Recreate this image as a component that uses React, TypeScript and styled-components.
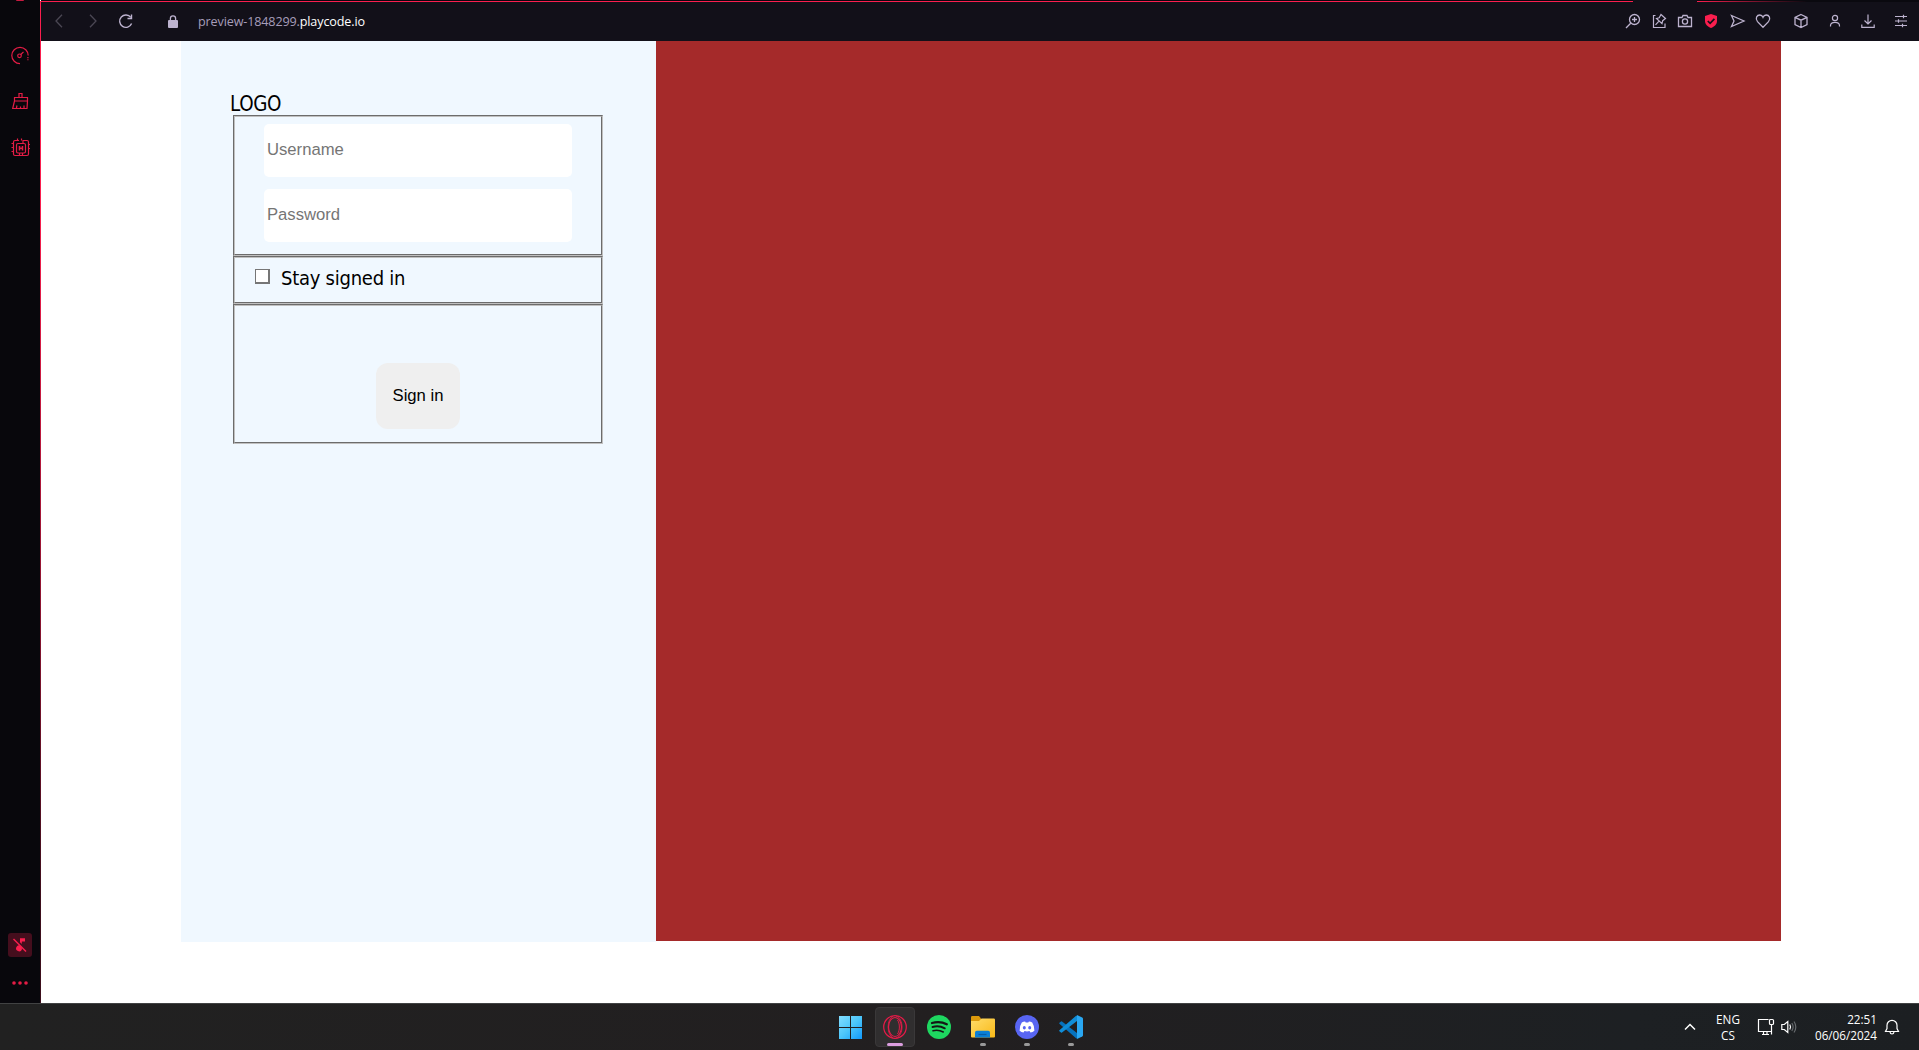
import React from 'react';
import styled, { createGlobalStyle } from 'styled-components';

const Global = createGlobalStyle`
  *, *::before, *::after { box-sizing: border-box; }
  html, body { margin: 0; padding: 0; background: #fff; overflow: hidden; }
  svg { display: block; overflow: visible; }
`;

const ui = `'Open Sans', 'Noto Sans', sans-serif`;
const formFont = `'DejaVu Sans Condensed', 'DejaVu Sans', sans-serif`;

const Screen = styled.div`
  width: 1919px;
  height: 1050px;
  display: flex;
  flex-direction: column;
  overflow: hidden;
`;
const Browser = styled.div`
  height: 1003px;
  display: flex;
`;
const Sidebar = styled.nav`
  width: 40px;
  height: 100%;
  background: #08070c;
  display: flex;
  flex-direction: column;
  align-items: center;
  color: #e31c45;
`;
const TabNub = styled.div`
  width: 8px;
  height: 1px;
  background: #c81a40;
  border-radius: 0 0 4px 4px;
`;
const SideItem = styled.div<{ $top: number }>`
  width: 24px;
  height: 24px;
  margin-top: ${(p) => p.$top}px;
  display: grid;
  place-items: center;
`;
const MuteTile = styled(SideItem)`
  background: #450e1d;
  border-radius: 3px;
  margin-top: auto;
  color: #fa1e4e;
`;
const MoreItem = styled(SideItem)`
  margin-bottom: 8px;
`;
const Edge = styled.div`
  width: 1px;
  margin-top: 1px;
  background: linear-gradient(#fa1e4e 0, #fa1e4e 20%, #3c0e1c 90%);
`;
const Main = styled.div`
  flex: 1;
  display: flex;
  flex-direction: column;
`;
const TopLine = styled.div`
  height: 2px;
  display: flex;
  background: #0a090f;
`;
const Line = styled.div<{ $w: number; $kind?: 'gap' | 'fade' }>`
  width: ${(p) => p.$w}px;
  height: ${(p) => (p.$kind === 'gap' ? 2 : 1)}px;
  margin-top: ${(p) => (p.$kind === 'gap' ? 0 : 1)}px;
  background: ${(p) =>
    p.$kind === 'gap' ? '#121019' : p.$kind === 'fade' ? 'linear-gradient(90deg, #fa1e4e, #0a090f)' : '#fa1e4e'};
`;
const Toolbar = styled.header`
  height: 39px;
  background: #121019;
  display: flex;
  align-items: center;
  padding-bottom: 1px;
  color: #bdb3cf;
`;
const NavSlot = styled.div<{ $w: number }>`
  width: ${(p) => p.$w}px;
  display: grid;
  place-items: center;
`;
const NavGroup = styled.div`
  display: flex;
  align-items: center;
`;
const Url = styled.div`
  font: 12.6px/18px ${ui};
  letter-spacing: -0.14px;
  margin-left: -5px;
  padding-top: 1px;
  white-space: nowrap;
  color: #a69dba;
  b { font-weight: 400; color: #fff; }
`;
const Actions = styled.div<{ $gap?: number; $end?: boolean }>`
  display: flex;
  margin-left: ${(p) => (p.$end ? 'auto' : `${p.$gap ?? 0}px`)};
`;
const Page = styled.main`
  height: 962px;
  background: #fff;
  display: flex;
  align-items: flex-start;
  padding-left: 140px;
`;
const LoginPanel = styled.section`
  width: 475px;
  height: 901px;
  background: aliceblue;
  padding: 50px 53px 0 50px;
`;
const Hero = styled.section`
  width: 1125px;
  height: 900px;
  background: brown;
`;
const Logo = styled.div`
  height: 24px;
  font: 20.4px/27px ${formFont};
  font-stretch: condensed;
  letter-spacing: -0.35px;
  margin-left: -1px;
  color: #000;
`;
const Form = styled.form`
  display: flex;
  flex-direction: column;
  margin-left: 2px;
`;
const Group = styled.fieldset<{ $h: number; $pad: string }>`
  margin: 0;
  min-width: 0;
  border: 2px groove #c0c0c0;
  height: ${(p) => p.$h}px;
  padding: ${(p) => p.$pad};
`;
const Field = styled.input`
  display: block;
  width: 308px;
  height: 53px;
  margin-bottom: 12px;
  border: 0;
  border-radius: 5px;
  background: #fff;
  padding: 0 3px 2px;
  font: 16.67px 'Liberation Sans', Arial, sans-serif;
  &::placeholder { color: #757575; opacity: 1; }
`;
const CheckRow = styled.label`
  display: flex;
  align-items: flex-start;
  gap: 11px;
`;
const Check = styled.input`
  appearance: none;
  width: 15px;
  height: 15px;
  margin: 0;
  border: 1px solid #767676;
  border-right-width: 2px;
  border-bottom-width: 2px;
  background: #fff;
`;
const CheckText = styled.span`
  font: 20px/26px ${formFont};
  font-stretch: condensed;
  margin-top: -4px;
  letter-spacing: -0.25px;
  white-space: nowrap;
  color: #000;
`;
const Submit = styled.button`
  display: block;
  width: 84px;
  height: 66px;
  margin: 0 auto;
  border: 0;
  border-radius: 12px;
  background: #efefef;
  padding: 0;
  font: 16.67px 'Liberation Sans', Arial, sans-serif;
  color: #000;
`;
const Taskbar = styled.footer`
  height: 47px;
  border-top: 1px solid #414243;
  background: linear-gradient(90deg, #212121 0, #221f20 50%, #1d2023 85%, #1c1f22 100%);
  display: grid;
  grid-template-columns: 831px 1fr 242px;
`;
const Apps = styled.div`
  grid-column: 2;
  display: flex;
  gap: 4px;
  padding-top: 3px;
`;
const App40 = styled.div<{ $active?: boolean; $run?: boolean }>`
  width: 40px;
  height: 40px;
  border-radius: 4px;
  border: 1px solid ${(p) => (p.$active ? '#3a3839' : 'transparent')};
  background: ${(p) => (p.$active ? '#302e2f' : 'transparent')};
  display: flex;
  flex-direction: column;
  align-items: center;
  justify-content: space-between;
  padding-top: 7px;
  &::after {
    content: '';
    width: ${(p) => (p.$active ? 16 : 6)}px;
    height: 3px;
    border-radius: 2px;
    background: ${(p) => (p.$active ? '#dc9ee0' : p.$run ? '#999' : 'transparent')};
  }
`;
const Tray = styled.div`
  display: flex;
  align-items: center;
  padding-bottom: 1px;
  color: #fff;
  font: 11.7px/16px ${ui};
`;
const TrayIcon = styled.div<{ $w: number }>`
  width: ${(p) => p.$w}px;
  display: grid;
  place-items: center;
`;
const Lang = styled.div`
  width: 50px;
  text-align: center;
`;
const Clock = styled.div`
  width: 78px;
  text-align: right;
  white-space: nowrap;
`;

const Glyph = ({ s = 16, w = 1.2, children }: { s?: number; w?: number; children: React.ReactNode }) => (
  <svg width={s} height={s} viewBox={`0 0 ${s} ${s}`} fill="none" stroke="currentColor" strokeWidth={w}>
    {children}
  </svg>
);

const Gauge = () => (
  <Glyph s={18} w={1.2}>
    <path d="M9 17.7A8.200 8.200 0 1 1 17.200 9.500" />
    <path d="M16.900 11v1.200M16.900 13.300v1" />
    <circle cx="8.500" cy="9.800" r="1.800" />
    <path d="M9.800 8.500L12.500 5.800" />
  </Glyph>
);
const Broom = () => (
  <Glyph s={18} w={1.200}>
    <path d="M8 5.500V1.500h3v4M3.500 9V5.500h13V9zM3.500 9L1.700 16.500h14.300L16.500 9M5.300 16.500l.7-3M9.500 16.500v-2M13 16.500v-3" />
  </Glyph>
);
const Chip = () => (
  <Glyph s={20} w={1.200}>
    <path d="M9 3.500H5a1.500 1.500 0 0 0-1.500 1.500v12A1.500 1.500 0 0 0 5 18.500h12a1.500 1.500 0 0 0 1.500-1.500V5A1.500 1.500 0 0 0 17 3.500h-4v3" />
    <rect x="6.500" y="6.500" width="9" height="9.500" rx="1.500" />
    <path d="M7.500 3.500V1.500M11.500 3.500V1.500M3.500 6.500H1.500M3.500 10.500H1.500M3.500 14.500H1.500M18.500 7.500H20M18.500 11.500H20M9.500 18v-2M12.500 18v-2" />
    <path d="M9.500 9v4.500M12.500 9v4.500M9.500 11.200h3" strokeWidth="1.500" />
  </Glyph>
);
const Muted = () => (
  <Glyph s={16} w={1.4}>
    <path d="M1.500 2L14 14.500" />
    <path d="M8 1.300h5v3.300H9.800v2.500L8 5.300zM8.500 8.700a3 3 0 1 0 1.400 3.800v-2.300z" fill="currentColor" stroke="none" />
  </Glyph>
);
const Dots = () => (
  <Glyph s={18}>
    <g fill="currentColor" stroke="none">
      <circle cx="3" cy="9" r="1.800" /><circle cx="9" cy="9" r="1.800" /><circle cx="15" cy="9" r="1.800" />
    </g>
  </Glyph>
);

const Reload = () => (
  <Glyph s={16} w={1.4}>
    <path d="M13.600 10.500A6.200 6.200 0 1 1 12.800 4.400" />
    <path d="M13.500 1.500v4h-4" />
  </Glyph>
);
const Lock = () => (
  <svg width="10" height="13" viewBox="0 0 10 13">
    <rect y="5" width="10" height="8" rx="1" fill="#bdb3cf" />
    <path d="M2.400 6V3.500a2.600 2.600 0 0 1 5.200 0V6" fill="none" stroke="#bdb3cf" strokeWidth="1.300" />
  </svg>
);

const Search = () => (
  <Glyph w={1.3}><circle cx="9.500" cy="6.500" r="5" /><path d="M5.700 10.200L1 15M9.500 4v5M7 6.500h5" /></Glyph>
);
const Pin = () => (
  <Glyph>
    <path d="M4.500 2.500h-2v12h11.500V10.500" />
    <path d="M10 1.500l4.500 4-2.800 2.200-.7 3L5.500 5.500l2.700-.7zM8 8.200L4.500 11.800" />
  </Glyph>
);
const Camera = () => (
  <Glyph w={1.3}><path d="M1.500 4.500H5l1-2h4l1 2h3.500v9h-13z" /><circle cx="8" cy="8.500" r="2.600" /></Glyph>
);
const Shield = () => (
  <Glyph>
    <path d="M8 1l6 2v5c0 3.500-2.500 5.500-6 7-3.500-1.500-6-3.500-6-7V3z" fill="#fa1e4e" stroke="none" />
    <path d="M4.800 8l2.300 2.300 4.300-4.500" stroke="#121019" strokeWidth="1.700" />
  </Glyph>
);
const Send = () => <Glyph w={1.3}><path d="M2.500 2.500L15 8 2.500 13.500 5 8z" /></Glyph>;
const Heart = () => (
  <Glyph w={1.3}><path d="M8 14.200L2.500 8.600C-.2 5.300 2 2 4.800 2 6.500 2 7.500 3 8 4.200 8.500 3 9.500 2 11.200 2c2.800 0 5 3.300 2.300 6.600z" /></Glyph>
);
const Cube = () => (
  <Glyph w={1.3}><path d="M8 1.500l6 2.800v7.400L8 14.500l-6-2.800V4.300zM2 4.300l6 2.900 6-2.900M8 7.200v7.300" /></Glyph>
);
const Person = () => (
  <Glyph><circle cx="8" cy="5" r="2.600" /><path d="M3.500 13.500v-.8C3.500 10.500 5 9.300 8 9.300s4.500 1.200 4.500 3.400v.8" /></Glyph>
);
const Download = () => (
  <Glyph><path d="M8 1.500v9M4.500 7.500L8 11l3.500-3.500M1.800 11.500v2.800h12.400v-2.800" /></Glyph>
);
const Sliders = () => (
  <Glyph><path d="M2 3.500h12M2 8h12M2 12.500h12M10.500 1.800v3.400M5.500 6.300v3.400M9.500 10.800v3.400" /></Glyph>
);

const Windows = () => (
  <svg width="24" height="24" viewBox="0 0 24 24">
    <defs>
      <linearGradient id="win" gradientUnits="userSpaceOnUse" x1="1" y1="1" x2="23" y2="23">
        <stop stopColor="#80dcff" /><stop offset=".5" stopColor="#4cc6fa" /><stop offset="1" stopColor="#149bfb" />
      </linearGradient>
    </defs>
    <path d="M0 1h11v11H0zM12 1h11v11H12zM0 13h11v11H0zM12 13h11v11H12z" fill="url(#win)" />
  </svg>
);
const Opera = () => (
  <svg width="24" height="24" viewBox="0 0 24 24" fill="none" stroke="#e51b48" strokeWidth="1.200">
    <circle cx="12" cy="12" r="11.300" /><ellipse cx="12" cy="12" rx="6.500" ry="9.500" />
    <path d="M10 1.200C3.500 4 3.500 20 10 22.800M13 1c8 2 8 20 0 22" strokeWidth=".8" /><path d="M14.500 5c2.500 3.500 2.500 10.500 0 14" strokeWidth="1" />
  </svg>
);
const Spotify = () => (
  <svg width="24" height="24" viewBox="0 0 24 24" fill="none" stroke="#151515" strokeLinecap="round">
    <circle cx="12" cy="12" r="12" fill="#1ed760" stroke="none" />
    <path d="M5 8c5-1.500 10.500-1 14.800 1.300" strokeWidth="2.300" />
    <path d="M5.500 12c4.200-1.200 8.600-.7 12.300 1.300" strokeWidth="1.900" />
    <path d="M6 15.700c3.500-.9 7-.5 10.300 1.300" strokeWidth="1.500" />
  </svg>
);
const Folder = () => (
  <svg width="24" height="24" viewBox="0 0 24 24">
    <defs><linearGradient id="fold" x1="0" y1="0" x2="1" y2="1"><stop stopColor="#ffdc69" /><stop offset="1" stopColor="#f9b918" /></linearGradient></defs>
    <path d="M0 2.200Q0 1 1.200 1H8l2 2.500V9H0z" fill="#dc9a0c" />
    <path d="M0 6h8l2.500-2.500h12.300Q24 3.500 24 4.700V21.500Q24 22.500 23 22.500H1Q0 22.500 0 21.500z" fill="url(#fold)" />
    <path d="M4 22.500V17.500Q4 15.700 5.800 15.700h11.400q1.800 0 1.800 1.800v5z" fill="#0b7fd6" />
    <path d="M7.500 19.500h8" stroke="#075da8" strokeWidth="1.200" />
  </svg>
);
const Discord = () => (
  <svg width="24" height="24" viewBox="0 0 24 24">
    <circle cx="12" cy="12" r="12" fill="#5865f2" />
    <path d="M6.800 7.400Q8.300 6.600 10.100 6.400l.6 1.100h2.600l.6-1.100q1.800.2 3.300 1 2.500 3.700 2.200 8.300-1.800 1.400-3.900 1.900l-1-1.500q-2.500.6-5 0l-1 1.500q-2.100-.5-3.900-1.900-.3-4.600 2.200-8.300z" fill="#fff" />
    <ellipse cx="9.300" cy="12.700" rx="1.500" ry="1.700" fill="#5865f2" /><ellipse cx="14.700" cy="12.700" rx="1.500" ry="1.700" fill="#5865f2" />
  </svg>
);
const Code = () => (
  <svg width="24" height="24" viewBox="0 0 24 24">
    <path d="M.4 7.800l1.600-1.300q.5-.4 1 0L18 18v5.500q-.7-.1-1.200-.6L.4 8.800q-.5-.5 0-1z" fill="#0672bd" />
    <path d="M.4 16.200l1.600 1.300q.5.400 1 0L18 6V.5q-.7.100-1.200.6L.4 15.200q-.5.500 0 1z" fill="#108dd8" />
    <path d="M18 .1l5.200 2.400q.8.400.8 1.300v16.400q0 .9-.8 1.300L18 23.900z" fill="#2aa7f2" />
  </svg>
);

const Monitor = () => (
  <Glyph s={18} w={1.200}><path d="M11.500 1.500h-10v12h13M5 16.500h7M6.500 13.500v3M10 13.500v3M14.500 7v9.500" /><rect x="12.500" y="1.500" width="4" height="5" rx="1" /></Glyph>
);
const Speaker = () => (
  <Glyph s={16} w={1.200}>
    <path d="M.8 5.500h2.500l3.500-3v11l-3.500-3H.8z" /><path d="M8.800 5.500q1.500 2.500 0 5" />
    <path d="M10.800 4q2.700 4 0 8M13 2.500q3.600 5.500 0 11" stroke="#666a6d" />
  </Glyph>
);
const Bell = () => (
  <Glyph s={16} w={1.200}><path d="M1.500 12.500h13L13 9.500V6.300a5 5 0 0 0-10 0v3.200zM6 13q.3 2 2 2t2-2" /></Glyph>
);

export default function App() {
  return (
    <Screen>
      <Global />
      <Browser>
        <Sidebar>
          <TabNub />
          <SideItem $top={42}><Gauge /></SideItem>
          <SideItem $top={22}><Broom /></SideItem>
          <SideItem $top={22}><Chip /></SideItem>
          <MuteTile $top={0}><Muted /></MuteTile>
          <MoreItem $top={14}><Dots /></MoreItem>
        </Sidebar>
        <Edge />
        <Main>
          <TopLine>
            <Line $w={1592} />
            <Line $w={64} $kind="gap" />
            <Line $w={110} $kind="fade" />
          </TopLine>
          <Toolbar>
            <NavGroup>
              <NavSlot $w={35}><svg width="8" height="14" viewBox="0 0 8 14" fill="none" stroke="#4b4754" strokeWidth="1.300"><path d="M7 .7L1 7l6 6.300" /></svg></NavSlot>
              <NavSlot $w={33}><svg width="8" height="14" viewBox="0 0 8 14" fill="none" stroke="#4b4754" strokeWidth="1.300"><path d="M1 .7L7 7l-6 6.300" /></svg></NavSlot>
              <NavSlot $w={34}><Reload /></NavSlot>
              <NavSlot $w={60}><Lock /></NavSlot>
            </NavGroup>
            <Url>preview-1848299.<b>playcode.io</b></Url>
            <Actions $end>
              {[Search, Pin, Camera, Shield, Send, Heart].map((I, i) => <NavSlot key={i} $w={26}><I /></NavSlot>)}
            </Actions>
            <Actions $gap={8}>
              {[Cube, Person, Download, Sliders].map((I, i) => <NavSlot key={i} $w={33.4}><I /></NavSlot>)}
            </Actions>
            <NavSlot $w={1} />
          </Toolbar>
          <Page>
            <LoginPanel>
              <Logo>LOGO</Logo>
              <Form>
                <Group $h={141} $pad="7px 0 0 29px">
                  <Field placeholder="Username" />
                  <Field placeholder="Password" type="password" />
                </Group>
                <Group $h={48} $pad="11px 0 0 20px">
                  <CheckRow><Check type="checkbox" /><CheckText>Stay signed in</CheckText></CheckRow>
                </Group>
                <Group $h={140} $pad="57px 0 0">
                  <Submit type="button">Sign in</Submit>
                </Group>
              </Form>
            </LoginPanel>
            <Hero />
          </Page>
        </Main>
      </Browser>
      <Taskbar>
        <Apps>
          <App40><Windows /></App40>
          <App40 $active><Opera /></App40>
          <App40><Spotify /></App40>
          <App40 $run><Folder /></App40>
          <App40 $run><Discord /></App40>
          <App40 $run><Code /></App40>
        </Apps>
        <Tray>
          <TrayIcon $w={26}><svg width="12" height="8" viewBox="0 0 12 8" fill="none" stroke="#fff" strokeWidth="1.500"><path d="M1 6.500l5-5 5 5" /></svg></TrayIcon>
          <Lang>ENG<br />CS</Lang>
          <TrayIcon $w={26}><Monitor /></TrayIcon>
          <TrayIcon $w={20}><Speaker /></TrayIcon>
          <Clock>22:51<br />06/06/2024</Clock>
          <TrayIcon $w={30}><Bell /></TrayIcon>
        </Tray>
      </Taskbar>
    </Screen>
  );
}
